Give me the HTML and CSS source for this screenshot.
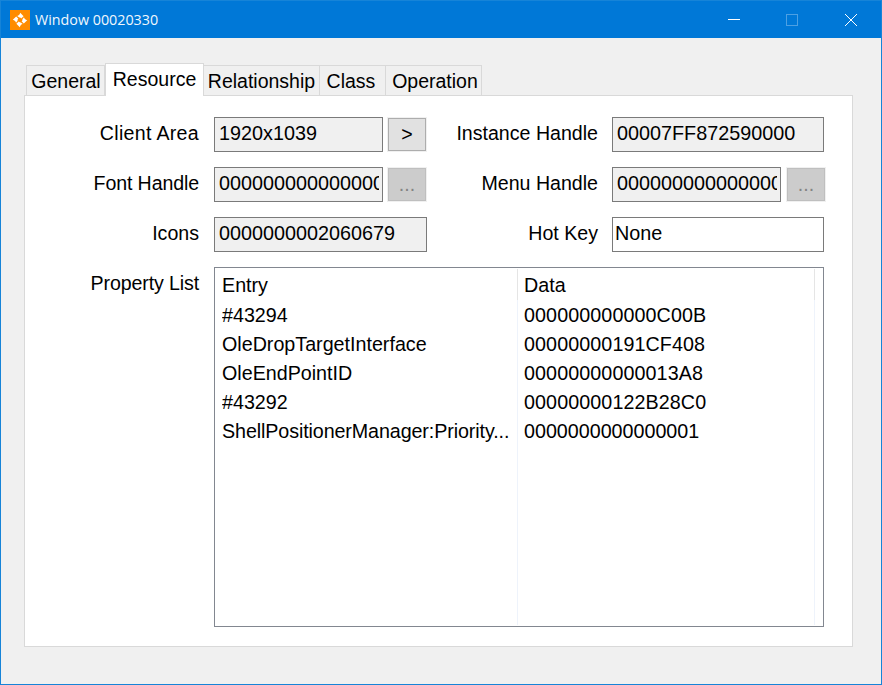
FILE: index.html
```html
<!DOCTYPE html>
<html lang="en">
<head>
<meta charset="utf-8">
<title>Window 00020330</title>
<link rel="stylesheet" href="styles.css">
</head>
<body>
<div class="window">
  <header class="titlebar">
    <svg class="app-icon" viewBox="0 0 20 20" width="20" height="20" aria-hidden="true">
      <rect width="20" height="20" fill="#ff8c00"/>
      <g fill="#fff">
        <path d="M10.2 2.8 L13.6 6.2 L11.2 8.4 C10.9 7.8 10.2 7.4 9.2 7.6 L7.2 6 C8.6 5.8 9.8 4.6 10.2 2.8 Z"/>
        <path d="M10.2 2.8 L13.6 6.2 L11.2 8.4 C10.9 7.8 10.2 7.4 9.2 7.6 L7.2 6 C8.6 5.8 9.8 4.6 10.2 2.8 Z" transform="rotate(90 10 10)"/>
        <path d="M10.2 2.8 L13.6 6.2 L11.2 8.4 C10.9 7.8 10.2 7.4 9.2 7.6 L7.2 6 C8.6 5.8 9.8 4.6 10.2 2.8 Z" transform="rotate(180 10 10)"/>
        <path d="M10.2 2.8 L13.6 6.2 L11.2 8.4 C10.9 7.8 10.2 7.4 9.2 7.6 L7.2 6 C8.6 5.8 9.8 4.6 10.2 2.8 Z" transform="rotate(270 10 10)"/>
      </g>
    </svg>
    <span class="title">Window 00020330</span>
    <div class="caption-buttons">
      <span class="caption"><svg viewBox="0 0 12 12" width="12" height="12"><path d="M0 5.5H12" stroke="#fff" fill="none"/></svg></span>
      <span class="caption"><svg viewBox="0 0 12 12" width="12" height="12"><rect x=".5" y=".5" width="11" height="11" stroke="#fff" stroke-opacity=".3" fill="none"/></svg></span>
      <span class="caption"><svg viewBox="0 0 12 12" width="12" height="12"><path d="M0 0L12 12M12 0L0 12" stroke="#fff" stroke-width="1" fill="none"/></svg></span>
    </div>
  </header>
  <main class="content">
    <nav class="tabs">
      <span class="tab tab-general">General</span>
      <span class="tab tab-active">Resource</span>
      <span class="tab tab-relationship">Relationship</span>
      <span class="tab tab-class">Class</span>
      <span class="tab tab-operation">Operation</span>
    </nav>
    <section class="panel">
      <div class="form">
        <label class="label label-wide">Client Area</label>
        <div class="control">
          <input class="field field-short readonly" readonly value="1920x1039">
          <button class="btn">&gt;</button>
        </div>
        <label class="label label-right">Instance Handle</label>
        <div class="control">
          <input class="field field-right readonly" readonly value="00007FF872590000">
        </div>

        <label class="label label-tight">Font Handle</label>
        <div class="control">
          <input class="field field-short readonly" readonly value="0000000000000000">
          <button class="btn btn-disabled">...</button>
        </div>
        <label class="label label-right">Menu Handle</label>
        <div class="control control-right">
          <input class="field field-short readonly" readonly value="0000000000000000">
          <button class="btn btn-disabled">...</button>
        </div>

        <label class="label">Icons</label>
        <div class="control">
          <input class="field field-full readonly" readonly value="0000000002060679">
        </div>
        <label class="label label-right">Hot Key</label>
        <div class="control">
          <input class="field field-right editable" value="None">
        </div>

        <label class="label label-tight">Property List</label>
        <div class="list">
          <div class="col col-entry">
            <div class="head">Entry</div>
            <div class="cell">#43294</div>
            <div class="cell">OleDropTargetInterface</div>
            <div class="cell">OleEndPointID</div>
            <div class="cell">#43292</div>
            <div class="cell cell-tight">ShellPositionerManager:Priority...</div>
          </div>
          <div class="col col-data">
            <div class="head">Data</div>
            <div class="cell cell-hex">000000000000C00B</div>
            <div class="cell cell-hex">00000000191CF408</div>
            <div class="cell cell-hex">00000000000013A8</div>
            <div class="cell cell-hex">00000000122B28C0</div>
            <div class="cell">0000000000000001</div>
          </div>
        </div>
      </div>
    </section>
  </main>
</div>
</body>
</html>
```
FILE: styles.css
```css
* { box-sizing: border-box; }
html, body { margin: 0; padding: 0; }
body { width: 882px; height: 685px; overflow: hidden; font-family: "Liberation Sans", Arial, sans-serif; font-size: 19.6px; color: #000; }

.window { width: 882px; height: 685px; display: flex; flex-direction: column; background: #f0f0f0; border: 1px solid #1684d8; border-top: 0; }

.titlebar { height: 38px; flex: none; display: flex; align-items: center; background: #0078d7; color: #fff; padding-left: 9px; border-top: 1px solid #1684d8; }
.app-icon { flex: none; }
.title { margin-left: 5px; padding-bottom: 1px; font-family: "Open Sans", sans-serif; font-size: 14.3px; color: #f0f7fd; }
.caption-buttons { margin-left: auto; display: flex; padding-right: 1px; }
.caption { width: 59px; height: 36px; display: flex; align-items: center; justify-content: center; }
.caption:first-child { width: 57px; }
.caption svg { display: block; }

.content { flex: 1; padding: 25px 28px 37px 23px; display: flex; flex-direction: column; }

.tabs { display: flex; height: 32px; align-items: flex-end; padding-left: 2px; position: relative; z-index: 1; flex: none; font-size: 19.5px; }
.tab { height: 30px; line-height: 31px; text-align: center; background: #f0f0f0; border: 1px solid #d9d9d9; border-bottom: 0; border-left: 0; }
.tab-general { width: 79px; border-left: 1px solid #d9d9d9; padding-left: 1px; }
.tab-active { width: 99px; height: 33px; margin-bottom: -1px; line-height: 30px; background: #fff; border-left: 1px solid #d9d9d9; padding-bottom: 3px; }
.tab-relationship { width: 116px; }
.tab-class { width: 66px; padding-right: 3px; }
.tab-operation { width: 96px; padding-left: 3px; }

.panel { flex: 1; background: #fff; border: 1px solid #d9d9d9; padding: 21px 0 0 14px; }

.form { display: grid; grid-template-columns: 160px 213px 155px 214px; grid-template-rows: 35px 35px 35px 360px; column-gap: 15px; row-gap: 15px; }

.label { line-height: 33px; text-align: right; }
.label-wide { letter-spacing: .3px; }
.label-tight { letter-spacing: -.12px; }
.label-right { margin-right: -1px; }

.control { display: flex; gap: 4px; }
.control-right { gap: 5px; }

.field { height: 35px; padding: 0 3px 2px 4px; margin: 0; border: 1px solid #7a7a7a; border-radius: 0; font: inherit; font-size: 19.8px; color: #000; outline: 0; }
.field-short { width: 169px; }
.field-full { width: 213px; }
.field-right { width: 212px; }
.readonly { background: #f0f0f0; }
.editable { background: #fff; padding-left: 2px; }

.btn { width: 40px; height: 35px; margin: 0; padding: 0; font: inherit; color: #000; background: #e1e1e1; border: 0; outline: 0; box-shadow: inset 0 0 0 1px #f0f0f0, inset 0 0 0 2px #adadad; }
.btn-disabled { background: #ccc; color: #838383; box-shadow: inset 0 0 0 1px #f0f0f0, inset 0 0 0 2px #bfbfbf; }

.list { grid-column: 2 / span 3; width: 610px; height: 360px; border: 1px solid #828790; padding: 1px; display: grid; grid-template-columns: 302px 297px 1fr; background: #fff; font-size: 19.7px; }
.col { border-right: 1px solid #eef3fb; padding-left: 6px; }
.head { height: 31px; line-height: 33px; margin: 0 -1px 0 -6px; padding-left: 6px; border-right: 1px solid #e5e5e5; }
.cell { height: 29px; line-height: 30px; white-space: nowrap; overflow: hidden; }
.cell-tight { letter-spacing: -.1px; }
.cell-hex { letter-spacing: .1px; }
```
